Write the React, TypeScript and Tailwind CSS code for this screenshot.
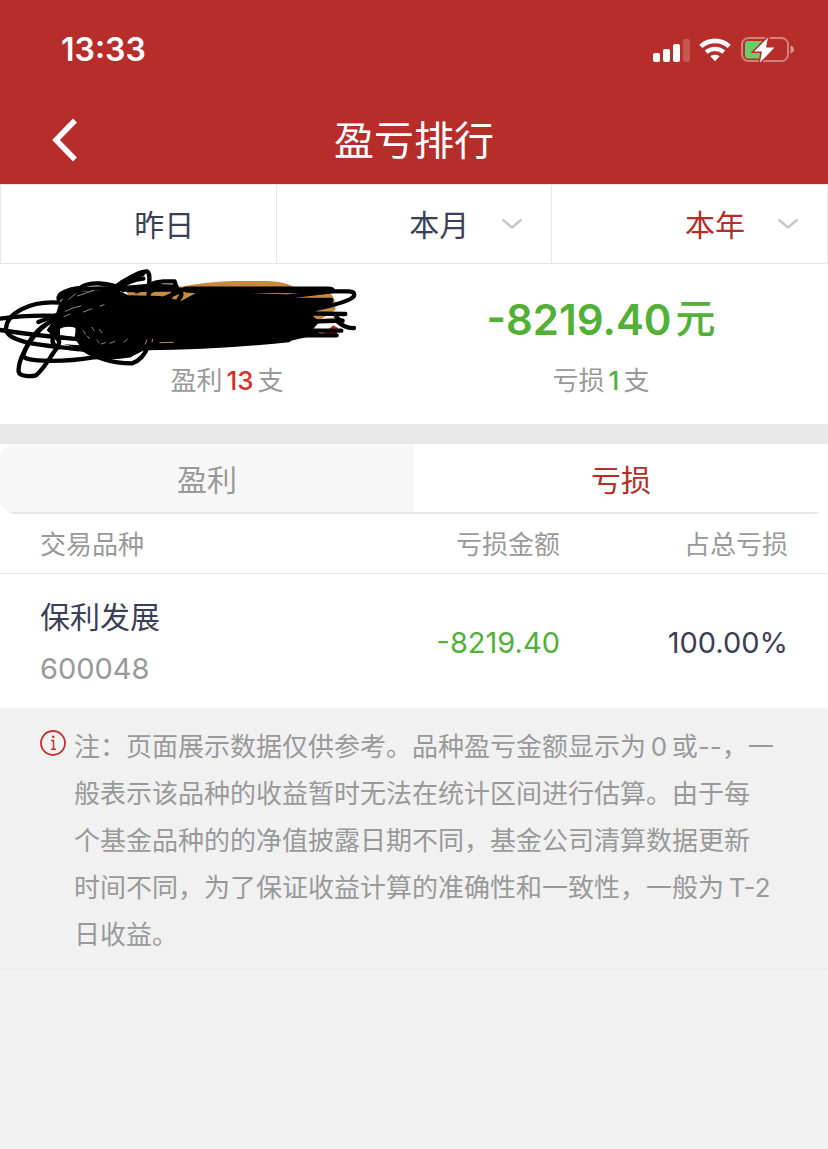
import type { ReactNode } from 'react'

const FONT = "font-['Inter','Noto_Sans_CJK_SC',sans-serif]"

const holdings = [
  { name: '保利发展', code: '600048', amount: '-8219.40', ratio: '100.00%' },
]

function SignalIcon() {
  return (
    <svg width="38" height="24" viewBox="0 0 38 24" fill="#fff" aria-hidden="true">
      <rect x="1" y="15" width="7" height="9" rx="2" />
      <rect x="11" y="11" width="7" height="13" rx="2" />
      <rect x="21" y="6" width="7" height="18" rx="2" />
      <rect x="31" y="1" width="7" height="23" rx="2" opacity="0.2" />
    </svg>
  )
}

function WifiIcon() {
  return (
    <svg width="32" height="24" viewBox="0 0 32 24" fill="none" stroke="#fff" aria-hidden="true">
      <path d="M1.800 8.400C9.800 1 22.200 1 30.200 8.400" strokeWidth="4.600" />
      <path d="M7.200 14.200C12.200 9.700 19.800 9.700 24.800 14.200" strokeWidth="4.400" />
      <path d="M11.400 18.200C14 16.200 18 16.200 20.600 18.200L16 23.200Z" fill="#fff" stroke="none" />
    </svg>
  )
}

function BatteryIcon() {
  return (
    <svg width="54" height="28" viewBox="0 0 54 28" fill="none" aria-hidden="true">
      <rect x="2" y="2" width="46" height="23" rx="6.500" stroke="#fff" strokeOpacity="0.4" strokeWidth="2" />
      <path d="M50.500 9.500C53 10.500 54 12 54 13.600S53 16.800 50.500 17.800Z" fill="#fff" fillOpacity="0.5" />
      <path d="M8 5H24V22.500H8Q5 22.500 5 19.500V8Q5 5 8 5Z" fill="#69ce66" />
      <path d="M28 1.500L14 15.500H22L20 26.500L34.500 11.500H26Z" fill="#fff" stroke="#b62d29" strokeWidth="3" paintOrder="stroke" />
    </svg>
  )
}

function Chevron() {
  return (
    <svg width="22" height="12" viewBox="0 0 22 12" fill="none" stroke="#c5c5ca" strokeWidth="2.400" aria-hidden="true">
      <path d="M1.500 1.500L11 9.500L20.500 1.500" />
    </svg>
  )
}

function InfoIcon() {
  return (
    <svg className="shrink-0" width="26" height="26" viewBox="0 0 26 26" fill="none" stroke="#bd3431" aria-hidden="true">
      <circle cx="13" cy="13" r="12" strokeWidth="1.800" />
      <circle cx="13.200" cy="6.800" r="1.300" fill="#bd3431" stroke="none" />
      <path d="M11 10.600H13.500V19M11 19.200H16" strokeWidth="1.500" />
    </svg>
  )
}

function Scribble() {
  return (
    <svg
      className="absolute left-0 top-0"
      width="370"
      height="120"
      viewBox="0 12 1110 360"
      fill="none"
      stroke="#000"
      strokeWidth="13"
      strokeLinecap="round"
      strokeLinejoin="round"
      aria-hidden="true"
    >
      <path
        d="M380 96L540 80Q640 64 700 63H800Q850 64 880 80L985 98Q1008 104 1006 150L960 180L900 230Q890 242 830 248L450 252Z"
        fill="#c58b40"
        stroke="none"
      />
      <path d="M940 180L1004 172V180L950 190Z" fill="#c58b40" stroke="none" />
      <path d="M965 224L1000 196L1014 204L1006 230H970Z" fill="#c12a20" stroke="none" />
      <path
        d="M176 134L200 100L345 86L385 106L480 108L545 122L600 92L640 96L860 104L900 116L960 124L940 170L960 184L940 206L960 222L872 242L620 264L440 268L400 286L330 294L250 270L172 246L140 210L164 176Z"
        fill="#000"
        stroke="none"
      />
      <g fill="#fff" stroke="none">
        <path d="M180 206Q200 196 228 204L224 232L180 226Z" />
        <path d="M178 240H228L238 256L182 252Z" />
      </g>
      <path d="M0 176Q80 164 180 168M0 210Q100 226 240 238" />
      <path d="M176 128C90 122 20 160 18 206C20 250 130 256 260 270" />
      <path d="M160 182C110 200 80 250 70 286C66 308 200 306 280 292L390 286" />
      <path d="M190 168C110 190 52 290 56 336C60 350 92 350 108 346C136 322 150 290 172 262C186 238 166 210 158 236Q154 256 176 262" />
      <path d="M232 200Q236 260 300 276M250 196Q236 230 270 250" />
      <path d="M115 186Q240 140 340 96C370 66 402 38 440 34C454 38 446 74 446 106" />
      <path d="M176 118C170 98 210 88 240 84C270 62 330 68 370 90M176 118Q200 94 240 90" />
      <path d="M210 100C230 86 290 84 350 86L446 78L530 80" />
      <path d="M350 78Q390 48 428 42M346 92Q390 58 430 56" />
      <path d="M380 90L540 88M410 96Q450 66 490 64H524Q534 86 510 112M450 96L480 78M490 116L540 94Q550 104 536 118" />
      <path d="M540 92L560 86H980Q1006 86 994 94L860 110L700 104M560 86L620 104" />
      <path d="M560 92L1046 94Q1066 94 1062 108Q1052 126 940 148L900 160" />
      <path d="M870 120H994Q996 132 900 142M900 160L1036 162M1006 164Q1012 180 1028 182L890 186M1012 184Q1036 206 1062 204M940 212L1024 212M900 226L1010 226" />
      <path d="M240 260C290 298 340 310 396 310C418 304 434 284 444 260" />
      <path d="M270 278Q310 294 360 290Q400 286 428 262" />
      <path d="M440 264Q660 262 866 240" />
      <g stroke="#fff" strokeWidth="2" opacity="0.8">
        <path d="M196 154Q216 142 242 138M192 170L210 162M250 156L276 146M300 138L312 134" />
        <path d="M250 212L256 222M276 202L282 212M298 208L306 218M262 228L268 236M290 240L298 248" />
        <path d="M304 252L316 248M330 250L344 244M372 246L382 238" />
        <path d="M206 118L226 102M232 108L280 92" />
      </g>
      <g stroke="#c58b40" strokeWidth="3">
        <path d="M390 104L430 100M440 240L436 252M458 238L456 246M480 248L520 247" />
      </g>
    </svg>
  )
}

function PeriodSelect({ label, active }: { label: string; active?: boolean }) {
  return (
    <div className="flex items-center justify-end gap-8 border-r border-[#e6e6e8] pr-7">
      <select
        aria-label={label}
        className={`appearance-none bg-transparent pt-[2px] text-3xl ${active ? 'text-[#b62d29]' : 'text-[#3c3e58]'}`}
      >
        <option>{label}</option>
      </select>
      <Chevron />
    </div>
  )
}

function Count({ label, children }: { label: string; children: ReactNode }) {
  return (
    <p className="mt-4 flex items-center justify-center gap-1 text-[26px] leading-9 text-[#999]">
      <span>{label}</span>
      {children}
      <span>支</span>
    </p>
  )
}

export default function App() {
  return (
    <div className={`min-h-screen w-full bg-[#f1f1f1] font-normal ${FONT}`}>
      <header className="bg-[#b62d29] text-white">
        <div className="flex h-24 items-center justify-between pl-[61px] pr-[34px] pt-1">
          <span className="text-[32px] font-semibold">13:33</span>
          <div className="flex items-center gap-[9px]">
            <SignalIcon />
            <WifiIcon />
            <BatteryIcon />
          </div>
        </div>
        <div className="grid h-22 grid-cols-[1fr_auto_1fr] items-center">
          <button aria-label="返回" className="ml-[50px] w-8">
            <svg width="28" height="44" viewBox="0 0 28 44" fill="none" stroke="#fff" strokeWidth="5.500">
              <path d="M25 2.500L6 22L25 41.500" />
            </svg>
          </button>
          <h1 className="pt-[2px] text-[40px] leading-none">盈亏排行</h1>
        </div>
      </header>

      <nav className="grid h-20 grid-cols-3 border border-r-0 border-[#e6e6e8] bg-white">
        <button className="border-r border-[#e6e6e8] pl-[52px] pt-[2px] text-3xl text-[#3c3e58]">昨日</button>
        <PeriodSelect label="本月" />
        <PeriodSelect label="本年" active />
      </nav>

      <section className="relative grid h-40 grid-cols-2 bg-white px-10 pt-[27px] text-center">
        <div>
          <div className="h-14" />
          <Count label="盈利">
            <span className="font-medium text-[#d2342c]">13</span>
          </Count>
        </div>
        <div>
          <p className="flex h-14 items-center justify-center gap-1 text-[#52b037]">
            <span className="text-[42px] font-semibold">-8219.40</span>
            <span className="text-[40px] font-medium">元</span>
          </p>
          <Count label="亏损">
            <span className="font-medium text-[#52b037]">1</span>
          </Count>
        </div>
        <Scribble />
      </section>

      <div className="h-5 bg-[#e8e8e8]" />

      <div className="grid h-[70px] grid-cols-2 bg-white text-3xl">
        <div className="overflow-hidden rounded-l-2xl">
          <button className="h-full w-full border-b-2 border-[#e6e6e6] bg-[#f7f7f7] pt-1 text-[#999]">盈利</button>
        </div>
        <div className="overflow-hidden rounded-r-2xl">
          <button className="h-full w-full border-b-2 border-[#e6e6e6] pt-1 text-[#b62d29]">亏损</button>
        </div>
      </div>

      <table className="w-full table-fixed bg-white">
        <thead>
          <tr className="h-[59px] border-b border-[#e6e6e6] text-[26px] text-[#999]">
            <th className="pl-10 pt-[2px] text-left font-normal">交易品种</th>
            <th className="pt-[2px] text-right font-normal">亏损金额</th>
            <th className="w-[268px] pr-10 pt-[2px] text-right font-normal">占总亏损</th>
          </tr>
        </thead>
        <tbody>
          {holdings.map((item) => (
            <tr key={item.code} className="h-[135px]">
              <td className="pl-10 pt-1">
                <div className="text-3xl leading-[52px] text-[#3c3e58]">{item.name}</div>
                <div className="text-[29px] leading-[52px] text-[#999]">{item.code}</div>
              </td>
              <td className="pt-1 text-right text-[29px] text-[#52b037]">{item.amount}</td>
              <td className="pr-10 pt-1 text-right text-[29px] text-[#3c3e58]">{item.ratio}</td>
            </tr>
          ))}
        </tbody>
      </table>

      <div className="flex gap-2 border-b border-[#ebebeb] pb-[10px] pl-10 pr-[53px] pt-[15px] text-[26px] leading-[47px] text-[#999]">
        <div className="pt-[7px]">
          <InfoIcon />
        </div>
        <p>
          注：页面展示数据仅供参考。品种盈亏金额显示为&thinsp;0&thinsp;或--，一般表示该品种的收益暂时无法在统计区间进行估算。由于每个基金品种的的净值披露日期不同，基金公司清算数据更新时间不同，为了保证收益计算的准确性和一致性，一般为&thinsp;T-2日收益。
        </p>
      </div>
    </div>
  )
}
